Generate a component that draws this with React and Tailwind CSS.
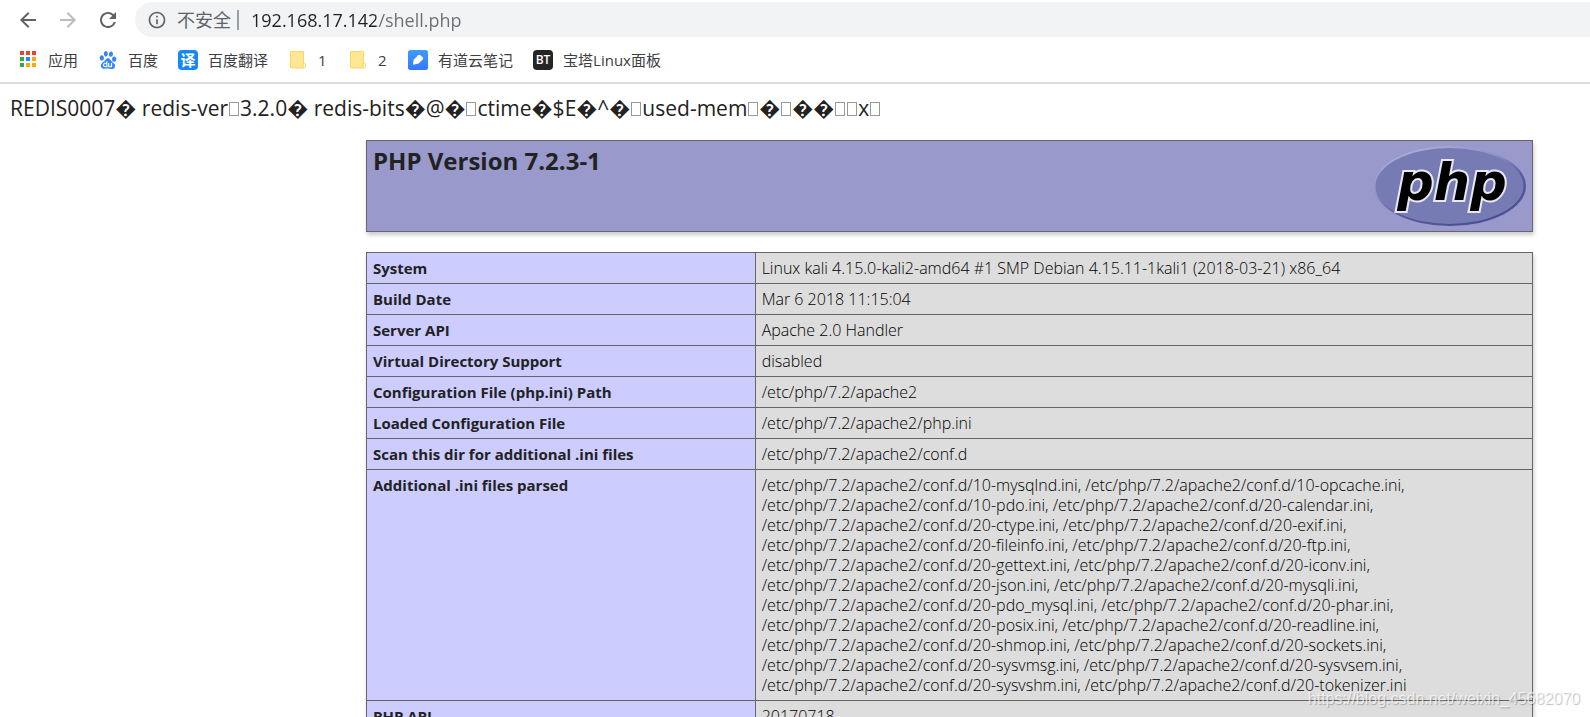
import React, { useState } from 'react';
import { SiBaidu } from 'react-icons/si';

const iniFiles = [
  ['10-mysqlnd', '10-opcache'],
  ['10-pdo', '20-calendar'],
  ['20-ctype', '20-exif'],
  ['20-fileinfo', '20-ftp'],
  ['20-gettext', '20-iconv'],
  ['20-json', '20-mysqli'],
  ['20-pdo_mysql', '20-phar'],
  ['20-posix', '20-readline'],
  ['20-shmop', '20-sockets'],
  ['20-sysvmsg', '20-sysvsem'],
  ['20-sysvshm', '20-tokenizer'],
];

const iniLines = iniFiles.map((pair) => pair.map((name) => `/etc/php/7.2/apache2/conf.d/${name}.ini`).join(', '));

const infoRows = [
  ['System', 'Linux kali 4.15.0-kali2-amd64 #1 SMP Debian 4.15.11-1kali1 (2018-03-21) x86_64'],
  ['Build Date', 'Mar 6 2018 11:15:04'],
  ['Server API', 'Apache 2.0 Handler'],
  ['Virtual Directory Support', 'disabled'],
  ['Configuration File (php.ini) Path', '/etc/php/7.2/apache2'],
  ['Loaded Configuration File', '/etc/php/7.2/apache2/php.ini'],
  ['Scan this dir for additional .ini files', '/etc/php/7.2/apache2/conf.d'],
  ['Additional .ini files parsed', iniLines.join(',\n')],
  ['PHP API', '20170718'],
];

// '\x01' stands for a control byte, shown as an empty box
const redisDump =
  'REDIS0007\uFFFD redis-ver\x013.2.0\uFFFD redis-bits\uFFFD@\uFFFD\x01ctime\uFFFD$E\uFFFD^\uFFFD\x01used-mem\x01\uFFFD\x01\uFFFD\uFFFD\x01\x01x\x01';

const AppsIcon = () => (
  <svg viewBox="0 0 20 20" className="size-5">
    <path fill="#ea4335" d="M2 1h4v4H2zM8 1h4v4H8zM14 1h4v4h-4z" />
    <path fill="#34a853" d="M2 7h4v4H2zM2 13h4v4H2z" />
    <path fill="#1a8cff" d="M8 7h4v4H8z" />
    <path fill="#fbab05" d="M14 7h4v4h-4zM8 13h4v4H8zM14 13h4v4h-4z" />
  </svg>
);

const FolderIcon = () => (
  <svg viewBox="0 0 20 20" className="size-5">
    <path fill="#ffe793" d="M3 1h12a1 1 0 0 1 1 1v16H3a1 1 0 0 1-1-1V2a1 1 0 0 1 1-1z" />
    <path fill="none" stroke="#fdd663" d="M15.500 13V2.500a1 1 0 0 0-1-1h-11a1 1 0 0 0-1 1v14.500a1 1 0 0 0 1 1h12.500a1.500 1.500 0 0 0 1.500-1.500V14.500a1.500 1.500 0 0 0-3 0v2" />
  </svg>
);

const NoteIcon = () => (
  <svg viewBox="0 0 20 20" className="size-5">
    <defs>
      <linearGradient id="note" x1="0" y1="0" x2="0" y2="1">
        <stop offset="0" stopColor="#3e9bff" />
        <stop offset="1" stopColor="#3478fb" />
      </linearGradient>
    </defs>
    <rect width="20" height="20" rx="2.500" fill="url(#note)" />
    <path fill="#fff" d="M5 14.800 5.600 9.800 10.200 5.200a1.500 1.500 0 0 1 1.800-.2l2.800 2.500a1.500 1.500 0 0 1 .1 1.800l-4.200 4.300z" />
  </svg>
);

const TranslateIcon = () => (
  <span className="flex size-5 items-center justify-center rounded-sm bg-[#1488fb] text-[15px] leading-5 font-bold text-white">译</span>
);

const PanelIcon = () => (
  <span className="flex size-5 items-center justify-center rounded-sm bg-[#252525] text-[12px] leading-5 font-semibold text-white">BT</span>
);

const bookmarks = [
  { label: '应用', icon: <AppsIcon /> },
  { label: '百度', icon: <SiBaidu size={18} color="#3385ff" /> },
  { label: '百度翻译', icon: <TranslateIcon /> },
  { label: '1', icon: <FolderIcon /> },
  { label: '2', icon: <FolderIcon /> },
  { label: '有道云笔记', icon: <NoteIcon /> },
  { label: '宝塔Linux面板', icon: <PanelIcon /> },
];

const PhpLogo = () => (
  <svg viewBox="0 0 152 80" className="h-20 w-[152px] shrink-0" role="img" aria-label="PHP logo">
    <defs>
      <linearGradient id="rim" x1="0.200" y1="0" x2="0.800" y2="1">
        <stop offset="0" stopColor="#b0b2da" />
        <stop offset="0.350" stopColor="#8f92c6" />
        <stop offset="0.600" stopColor="#5a5c9f" />
        <stop offset="1" stopColor="#484a92" />
      </linearGradient>
    </defs>
    <ellipse cx="76" cy="40" rx="76" ry="40" fill="url(#rim)" />
    <ellipse cx="75.500" cy="40" rx="74" ry="38" fill="#777bb4" />
    <text
      x="78"
      y="54"
      textAnchor="middle"
      fontSize="51"
      fontFamily="DejaVu Sans"
      fontWeight="bold"
      fontStyle="italic"
      fill="#000"
      stroke="#e8e8f2"
      strokeWidth="4"
      paintOrder="stroke"
    >
      php
    </text>
  </svg>
);

const Toolbar = () => {
  const [url, setUrl] = useState('192.168.17.142/shell.php');

  return (
    <div className="flex h-[39px] items-center pl-4 text-[#5f6368]">
      <div className="flex gap-4">
        <button type="button" aria-label="Back">
          <svg viewBox="0 0 24 24" fill="currentColor" className="size-6">
            <path d="M20 11H7.830l5.590-5.590L12 4l-8 8 8 8 1.410-1.410L7.830 13H20v-2z" />
          </svg>
        </button>
        <button type="button" aria-label="Forward" className="text-[#babcbe]">
          <svg viewBox="0 0 24 24" fill="currentColor" className="size-6">
            <path d="M12 4l-1.410 1.410L16.170 11H4v2h12.170l-5.580 5.590L12 20l8-8z" />
          </svg>
        </button>
        <button type="button" aria-label="Reload">
          <svg viewBox="0 0 24 24" fill="currentColor" className="size-6">
            <path d="M17.650 6.350A7.958 7.958 0 0 0 12 4c-4.420 0-7.990 3.580-7.990 8s3.570 8 7.990 8c3.730 0 6.840-2.550 7.730-6h-2.080A5.990 5.990 0 0 1 12 18c-3.310 0-6-2.690-6-6s2.690-6 6-6c1.660 0 3.140.690 4.220 1.780L13 11h7V4l-2.350 2.350z" />
          </svg>
        </button>
      </div>
      <form onSubmit={(e) => e.preventDefault()} className="ml-[15px] flex h-[35px] grow items-center rounded-l-full bg-[#f1f3f4] pl-3">
        <svg viewBox="0 0 24 24" fill="currentColor" className="size-5">
          <path d="M11 17h2v-6h-2v6zm1-15C6.480 2 2 6.480 2 12s4.480 10 10 10 10-4.480 10-10S17.520 2 12 2zm0 18c-4.410 0-8-3.590-8-8s3.590-8 8-8 8 3.590 8 8-3.590 8-8 8zM11 9h2V7h-2v2z" />
        </svg>
        <label htmlFor="address" className="ml-2.5 text-[18px] leading-6">不安全</label>
        <span className="ml-1.5 h-5 w-0.5 bg-[#9aa0a6]" />
        <input
          id="address"
          type="text"
          value={url}
          onChange={(e) => setUrl(e.target.value)}
          className="ml-3 grow bg-[linear-gradient(to_right,#202124_125px,#6b6f73_125px)] bg-clip-text text-[18px] leading-6 text-transparent outline-none"
        />
      </form>
    </div>
  );
};

const App = () => {
  return (
    <div className="relative flex h-screen flex-col overflow-hidden bg-white font-['Open_Sans','Noto_Sans_CJK_SC',sans-serif] text-[#222]">
      <header className="shrink-0 border-b-2 border-[#dadce0]">
        <Toolbar />
        <nav className="flex h-[43px] items-center gap-5 pb-0.5 pl-[18px] text-[15px] leading-5 text-[#3c4043]">
          {bookmarks.map((bookmark) => (
            <a key={bookmark.label} href="#" className="flex items-center gap-2.5">
              <span className="flex size-5 items-center justify-center">{bookmark.icon}</span>
              <span className="min-w-2.5">{bookmark.label}</span>
            </a>
          ))}
        </nav>
      </header>

      <main className="min-h-0 grow overflow-hidden">
        <p className="px-2.5 pt-2 text-[21px] leading-8 whitespace-pre">
          {redisDump.split('').map((char, i) =>
            char === '\x01' ? <span key={i} className="mx-px inline-block h-3.5 w-2.5 border border-[#999]" /> : char
          )}
        </p>

        <div className="mt-4 mr-[57px] ml-[366px]">
          <div className="flex items-start justify-between border border-[#666] bg-[#9999cc] px-1.5 py-[5px] shadow-[1px_3px_4px_#ccc]">
            <h1 className="text-[24px] leading-[30px] font-bold">PHP Version 7.2.3-1</h1>
            <PhpLogo />
          </div>

          <table className="mt-5 w-full border-collapse text-[15px] leading-5 shadow-[1px_3px_4px_#ccc]">
            <tbody>
              {infoRows.map(([name, value]) => (
                <tr key={name}>
                  <th scope="row" className="w-1/3 border border-[#666] bg-[#ccccff] px-1.5 py-[5px] text-left align-top font-bold">
                    {name}
                  </th>
                  <td className="border border-[#666] bg-[#dddddd] px-1.5 py-[5px] align-top text-[16px] leading-5 font-light whitespace-pre-line text-black">{value}</td>
                </tr>
              ))}
            </tbody>
          </table>
        </div>
      </main>

      <div className="absolute right-2.5 bottom-2 font-['Liberation_Sans',sans-serif] text-[16px] leading-5 text-white/70 [text-shadow:1px_1px_1px_rgba(0,0,0,0.25)]">
        https://blog.csdn.net/weixin_45682070
      </div>
    </div>
  );
};

export default App;
